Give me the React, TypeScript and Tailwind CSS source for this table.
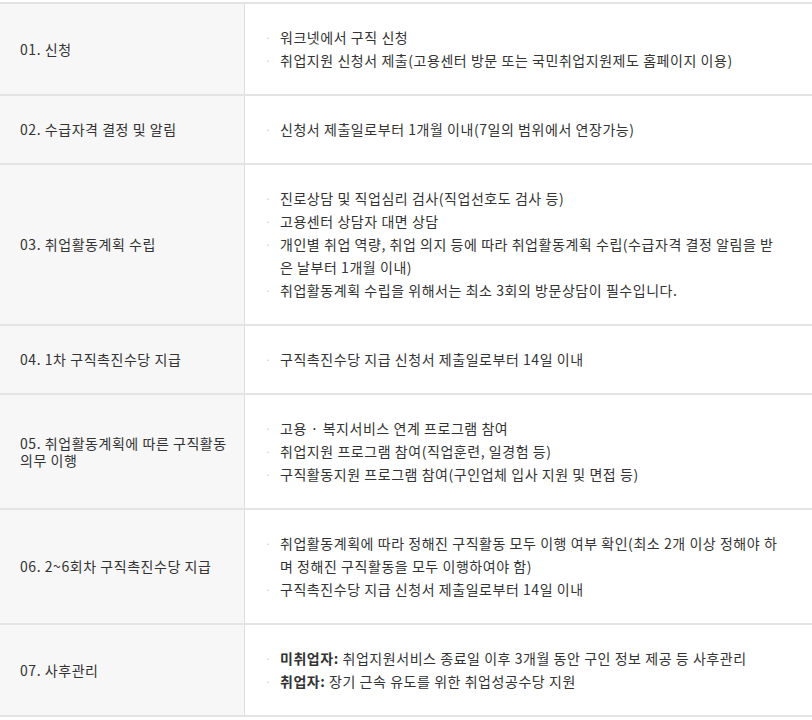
import React from 'react';

type Item = { bold?: string; text: string };
type Row = { label: React.ReactNode; items: Item[] };

const rows: Row[] = [
  {
    label: '01. 신청',
    items: [
      { text: '워크넷에서 구직 신청' },
      { text: '취업지원 신청서 제출(고용센터 방문 또는 국민취업지원제도 홈페이지 이용)' },
    ],
  },
  {
    label: '02. 수급자격 결정 및 알림',
    items: [{ text: '신청서 제출일로부터 1개월 이내(7일의 범위에서 연장가능)' }],
  },
  {
    label: '03. 취업활동계획 수립',
    items: [
      { text: '진로상담 및 직업심리 검사(직업선호도 검사 등)' },
      { text: '고용센터 상담자 대면 상담' },
      { text: '개인별 취업 역량, 취업 의지 등에 따라 취업활동계획 수립(수급자격 결정 알림을 받은 날부터 1개월 이내)' },
      { text: '취업활동계획 수립을 위해서는 최소 3회의 방문상담이 필수입니다.' },
    ],
  },
  {
    label: '04. 1차 구직촉진수당 지급',
    items: [{ text: '구직촉진수당 지급 신청서 제출일로부터 14일 이내' }],
  },
  {
    label: (
      <>
        <span className="whitespace-nowrap">05. 취업활동계획에 따른 구직활동</span>
        <br />
        의무 이행
      </>
    ),
    items: [
      { text: '고용 · 복지서비스 연계 프로그램 참여' },
      { text: '취업지원 프로그램 참여(직업훈련, 일경험 등)' },
      { text: '구직활동지원 프로그램 참여(구인업체 입사 지원 및 면접 등)' },
    ],
  },
  {
    label: '06. 2~6회차 구직촉진수당 지급',
    items: [
      { text: '취업활동계획에 따라 정해진 구직활동 모두 이행 여부 확인(최소 2개 이상 정해야 하며 정해진 구직활동을 모두 이행하여야 함)' },
      { text: '구직촉진수당 지급 신청서 제출일로부터 14일 이내' },
    ],
  },
  {
    label: '07. 사후관리',
    items: [
      { bold: '미취업자:', text: ' 취업지원서비스 종료일 이후 3개월 동안 구인 정보 제공 등 사후관리' },
      { bold: '취업자:', text: ' 장기 근속 유도를 위한 취업성공수당 지원' },
    ],
  },
];

export default function App() {
  return (
    <div className="w-[812px] h-[720px] bg-white pt-[2px] text-[#333] font-['Noto_Sans_CJK_KR','Noto_Sans',sans-serif] text-[14px] tracking-[0.55px]">
      <div className="border-t-2 border-[#e4e4e4]">
        {rows.map((row, i) => (
          <div key={i} className="flex border-b-2 border-[#e4e4e4]">
            <div className="w-[245px] shrink-0 bg-[#f7f7f7] border-r border-[#dedede] pl-[20px] pr-1 flex items-center leading-[17px]">
              <span>{row.label}</span>
            </div>
            <ul className="flex-1 py-[22px] pl-[20px] pr-[30px] leading-[23px]">
              {row.items.map((it, j) => (
                <li key={j} className="flex">
                  <span className="w-[15px] shrink-0 text-[#cfcfcf] text-[11px] tracking-normal">·</span>
                  <span className="break-all">
                    {it.bold && <b className="font-bold">{it.bold}</b>}
                    {it.text}
                  </span>
                </li>
              ))}
            </ul>
          </div>
        ))}
      </div>
    </div>
  );
}
